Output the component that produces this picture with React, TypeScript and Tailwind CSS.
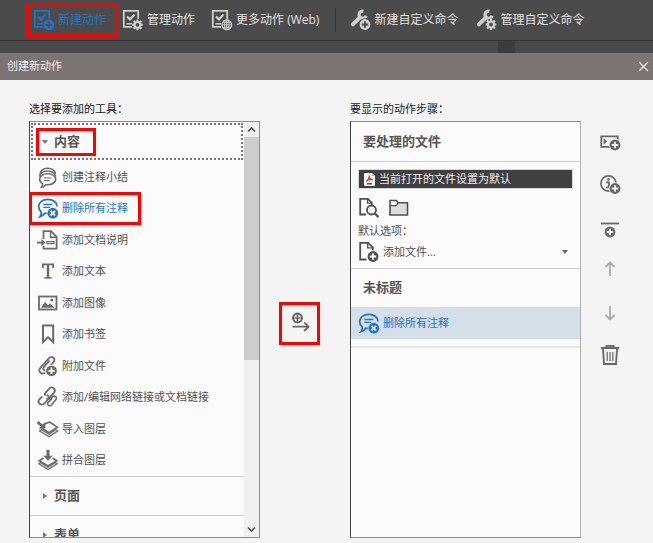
import type { ReactNode } from 'react';

type IconProps = { children: ReactNode; className?: string };

function Icon({ children, className = '' }: IconProps) {
  return (
    <svg
      viewBox="0 0 22 22"
      className={`size-[22px] shrink-0 ${className}`}
      fill="none"
      stroke="currentColor"
      strokeWidth="1.8"
      aria-hidden="true"
    >
      {children}
    </svg>
  );
}

type BadgeProps = { x: number; y: number; cut: string };

function PlusBadge({ x, y, cut }: BadgeProps) {
  return (
    <g transform={`translate(${x} ${y})`}>
      <circle r="6.2" fill={cut} stroke="none" />
      <circle r="5.4" fill="currentColor" stroke="none" />
      <path d="M-3.2 0h6.4M0-3.2v6.4" stroke={cut} strokeWidth="1.8" />
    </g>
  );
}

function GearBadge({ x, y, cut }: BadgeProps) {
  return (
    <g transform={`translate(${x} ${y})`}>
      <circle r="5.8" fill={cut} stroke="none" />
      <circle r="3" strokeWidth="2.2" />
      <path
        d="M0-5.4v2M0 5.4v-2M-5.4 0h2M5.4 0h-2M-3.9-3.9l1.4 1.4M3.9 3.9l-1.4-1.4M-3.9 3.9l1.4-1.4M3.9-3.9l-1.4 1.4"
        strokeWidth="2.1"
      />
    </g>
  );
}

function GlobeBadge({ x, y, cut }: BadgeProps) {
  return (
    <g transform={`translate(${x} ${y})`} strokeWidth="1">
      <circle r="6" fill={cut} stroke="none" />
      <circle r="4.9" strokeWidth="1.2" />
      <ellipse rx="2.2" ry="4.9" />
      <path d="M0-4.9v9.8M-4.9 0h9.8M-4-2.5h8M-4 2.5h8" />
    </g>
  );
}

function CheckDoc() {
  return (
    <>
      <path d="M10.5 17.8H1.8V1.9h14.4V10" />
      <path d="M5 7.5l3 3 4.5-5" strokeWidth="2.2" />
      <path d="M4.5 14.8H10" strokeWidth="1.5" />
    </>
  );
}

function Wrench() {
  return (
    <>
      <path d="M2.9 15.3L10 8.3" strokeWidth="4" strokeLinecap="round" />
      <path d="M13.4 2.2a3.6 3.6 0 1 0 2.7 4.5" strokeWidth="3.2" />
    </>
  );
}

function CommentDelete({ cut }: { cut: string }) {
  return (
    <Icon className="text-[#2574c4]">
      <path d="M11 16.3c-1.1.2-2.3.1-3.3 0-1 1.8-2.6 2.9-4.7 3.4 1-1.3 1.4-2.9 1.3-4.6-1.7-1.4-2.7-3.4-2.7-5.5 0-4.100 4.100-7.300 9.200-7.300s9.200 3 9.200 7.200" />
      <path d="M6.3 7.5h9M6.300 10.400H13" strokeWidth="1.3" />
      <circle cx="15.8" cy="16.2" r="6" fill={cut} stroke="none" />
      <circle cx="15.8" cy="16.2" r="5.4" fill="currentColor" stroke="none" />
      <path d="M13.5 13.9l4.6 4.6M18.1 13.9l-4.6 4.6" stroke={cut} strokeWidth="1.8" />
    </Icon>
  );
}

const LIST_BG = '#fbfbfb';

const tools = [
  {
    label: '创建注释小结',
    icon: (
      <Icon>
        <path
          d="M2.7 8.5c.7-4 3.9-6.3 7.9-6.3s7.2 2.1 8 5.8M2.5 10.7C3.4 7 6.500 5 10.600 5s7.300 1.900 8.200 5.500"
          strokeWidth="1.4"
        />
        <path
          d="M10.7 7.8c4.5 0 8 2.3 8 5.5s-3.5 5.500-8 5.500l-1.900-.1c-1 1.400-2.300 2.200-4.300 2.500.8-1 1.100-2.200 1-3.600-1.700-1-2.800-2.500-2.800-4.300 0-3.200 3.500-5.500 8-5.500z"
          fill={LIST_BG}
          strokeWidth="1.6"
        />
        <path d="M7 12h7.5M7 14.6h5.5" strokeWidth="1.2" />
      </Icon>
    ),
  },
  { label: '删除所有注释', icon: <CommentDelete cut={LIST_BG} />, marked: true },
  {
    label: '添加文档说明',
    icon: (
      <Icon>
        <path d="M6.5 10V2.200H14l5.600 5.600v11.800H6.500V17" />
        <path d="M13.500 2v6.300h6" strokeWidth="1.4" />
        <path d="M0 13.600h5" />
        <path d="M4.300 10l4.300 3.600-4.300 3.600z" fill="currentColor" stroke="none" />
        <rect x="10" y="12.6" width="7" height="2" strokeWidth="1.2" />
      </Icon>
    ),
  },
  {
    label: '添加文本',
    icon: (
      <Icon>
        <path d="M5.9 8V4.300h10.200V8" />
        <path d="M11 4.300v13.500" strokeWidth="2.4" />
        <path d="M7.300 17.900h7.400" strokeWidth="1.6" />
      </Icon>
    ),
  },
  {
    label: '添加图像',
    icon: (
      <Icon>
        <rect x="2" y="4.5" width="17.5" height="13" />
        <path d="M4 15.800l4-6 3 3.500 2-2 4.500 4.500z" fill="currentColor" stroke="none" />
        <circle cx="14.8" cy="8" r="1.5" fill="currentColor" stroke="none" />
      </Icon>
    ),
  },
  {
    label: '添加书签',
    icon: (
      <Icon>
        <path d="M6 2.500h10.200v16.600L11 14.300l-5 4.800z" strokeWidth="2" />
      </Icon>
    ),
  },
  {
    label: '附加文件',
    icon: (
      <Icon>
        <path d="M12.600 5.500l-6 7a2 2 0 0 0 3 2.600l6.700-7.800c3-3.600-1.300-7.300-4.500-3.900l-8.300 9.200c-3 3.500.7 7.400 4.400 5.300" />
        <PlusBadge x={14.5} y={15.8} cut={LIST_BG} />
      </Icon>
    ),
  },
  {
    label: '添加/编辑网络链接或文档链接',
    icon: (
      <Icon>
        <path d="M8.500 9.600C7.600 8.700 7.700 7.600 8.600 6.600l3.600-4c3-2.900 7.300.6 4.900 4l-4.400 5.100c-1 1-2.200 1.100-3.200.5" />
        <path d="M9.600 8.800c2.200.6 2.900 3 1.400 4.700l-3.700 4c-3.100 2.900-7.600-.8-4.900-4.200l3-2.900" />
        <path d="M12.600 14.300l3.200-3.700c1.900-1.600 4.500.4 3.300 2.700l-4.700 5.700c-1.700 1.700-4.300.5-3.800-1.800l4.600-5" strokeWidth="1.6" />
      </Icon>
    ),
  },
  {
    label: '导入图层',
    icon: (
      <Icon>
        <path d="M2.500 13l9.500 5.800 8.800-5.800-2-1.400-6.800 4.400-7.500-4.500z" fill="#d6d6d6" strokeWidth="1.200" />
        <path d="M8 6l4.500-2 7.800 5.200-8.300 5.500L4.500 10" strokeWidth="1.600" />
        <path d="M.5 4l4.800 4" strokeWidth="2.8" />
        <path d="M8.400 3.800v6.700H1.700z" fill="currentColor" stroke="none" />
      </Icon>
    ),
  },
  {
    label: '拼合图层',
    icon: (
      <Icon>
        <path d="M1.800 14.800L11 20.600l9.200-5.800-2-1.300L11 18l-7.200-4.500z" fill="#d6d6d6" strokeWidth="1.200" />
        <path d="M6.500 9l-4.300 2.700L11 17l8.800-5.300L15.500 9" strokeWidth="1.600" />
        <path d="M11 .8V8" strokeWidth="3" />
        <path d="M6.500 6.800h9L11 12z" fill="currentColor" stroke="none" />
      </Icon>
    ),
  },
];

const TOOLBAR_BG = '#4b4b4b';

const actionCommands = [
  {
    label: '管理动作',
    icon: <><CheckDoc /><GearBadge x={15.5} y={15.8} cut={TOOLBAR_BG} /></>,
  },
  {
    label: '更多动作 (Web)',
    icon: <><CheckDoc /><GlobeBadge x={15.8} y={15.8} cut={TOOLBAR_BG} /></>,
  },
];

const customCommands = [
  {
    label: '新建自定义命令',
    icon: <><Wrench /><PlusBadge x={15} y={15.5} cut={TOOLBAR_BG} /></>,
  },
  {
    label: '管理自定义命令',
    icon: <><Wrench /><GearBadge x={15} y={15.5} cut={TOOLBAR_BG} /></>,
  },
];

function Toolbar() {
  return (
    <header className="flex h-10 items-center bg-[#4b4b4b] pl-[26px] text-xs whitespace-nowrap text-[#e2e2e2]">
      <button className="flex h-[34px] w-[92px] items-center gap-[3px] border-3 border-[#ff0000] pl-1 text-[#2574c4]">
        <Icon>
          <CheckDoc />
          <PlusBadge x={15.8} y={15.8} cut={TOOLBAR_BG} />
        </Icon>
        新建动作
      </button>
      <div className="ml-1 flex gap-4">
        {actionCommands.map((command) => (
          <button key={command.label} className="flex items-center gap-[3px]">
            <Icon className="text-[#cfcfcf]">{command.icon}</Icon>
            {command.label}
          </button>
        ))}
      </div>
      <div className="ml-4 h-6 w-px bg-[#333333]" />
      <div className="ml-[14px] flex gap-[18px]">
        {customCommands.map((command) => (
          <button key={command.label} className="flex items-center gap-[2px]">
            <Icon className="text-[#cfcfcf]">{command.icon}</Icon>
            {command.label}
          </button>
        ))}
      </div>
    </header>
  );
}

function ToolList() {
  return (
    <div className="flex h-[417px] overflow-hidden border border-[#8a8a8a] border-l-[#444444] bg-[#fbfbfb]">
      <div className="min-w-0 flex-1">
        <div className="h-[39px] p-px">
          <div className="h-full border-2 border-dotted border-[#777777] py-[3px] pl-[3px]">
            <button className="flex h-7 w-[60px] items-center border-3 border-[#ff0000] pl-[3px] text-[13px] font-bold text-[#555555]">
              <svg viewBox="0 0 6 4" className="mr-[6px] h-1 w-[6px] fill-[#777777]" aria-hidden="true">
                <path d="M0 0h6L3 4z" />
              </svg>
              内容
            </button>
          </div>
        </div>
        <ul className="grid h-[315px] auto-rows-fr text-[11px] text-[#505050]">
          {tools.map((tool) => (
            <li key={tool.label} className="flex items-center">
              <button
                className={
                  tool.marked
                    ? '-my-px -ml-px flex h-[33px] w-[112px] items-center gap-[3px] border-3 border-[#ff0000] pl-[5px] whitespace-nowrap text-[#2574c4]'
                    : 'flex items-center gap-[3px] pl-[7px] whitespace-nowrap'
                }
              >
                <span className="text-[#6b6b6b]">{tool.icon}</span>
                {tool.label}
              </button>
            </li>
          ))}
        </ul>
        {['页面', '表单'].map((section) => (
          <button
            key={section}
            className="flex h-[39px] w-full items-center border-t border-[#cfcfcf] pl-[13px] text-[13px] font-bold text-[#555555]"
          >
            <svg viewBox="0 0 4 6" className="mr-[7px] h-[6px] w-1 fill-[#777777]" aria-hidden="true">
              <path d="M0 0v6l4-3z" />
            </svg>
            {section}
          </button>
        ))}
      </div>
      <div className="flex w-[15px] flex-col justify-between bg-[#f0f0f0] text-[#505050]">
        <div>
          <svg viewBox="0 0 15 15" className="size-[15px]" fill="none" stroke="currentColor" strokeWidth="1.6" aria-hidden="true">
            <path d="M4 9.500L7.500 6 11 9.500" />
          </svg>
          <div className="h-[223px] bg-[#cdcdcd]" />
        </div>
        <svg viewBox="0 0 15 15" className="size-[15px]" fill="none" stroke="currentColor" strokeWidth="1.6" aria-hidden="true">
          <path d="M4 5.500L7.500 9 11 5.500" />
        </svg>
      </div>
    </div>
  );
}

function StepList() {
  return (
    <div className="h-[417px] border border-[#8a8a8a] border-r-[#b0b0b0] border-l-[#444444] bg-[#fbfbfb] text-[11px] text-[#505050]">
      <h3 className="flex h-10 items-center border-b border-[#cfcfcf] pl-3 text-[13px] font-bold text-[#555555]">
        要处理的文件
      </h3>
      <div className="h-[107px] border-b border-[#cfcfcf] px-[7px] pt-[7px]">
        <div className="flex h-5 items-center gap-1 border border-[#d8d8d8] bg-[#404040] pl-[5px] text-[#f0f0f0]">
          <svg viewBox="0 0 11 13" className="h-[13px] w-[11px]" aria-hidden="true">
            <path d="M0 1a1 1 0 0 1 1-1h7l3 3v9a1 1 0 0 1-1 1H1a1 1 0 0 1-1-1z" fill="#f7f7f7" />
            <path d="M8 0v3h3z" fill="#bcbcbc" />
            <path
              d="M5 2.500c.2 3 1.300 4 4 4.300M5.400 3C5 5.500 4 7.300 2 8.400M2.600 7.600C4 6.600 6 6.200 9 6.800"
              fill="none"
              stroke="#e23b32"
              strokeWidth="1.3"
            />
            <path d="M3 10.800h5" stroke="#444444" strokeWidth="1.4" />
          </svg>
          当前打开的文件设置为默认
        </div>
        <div className="mt-2 flex gap-2">
          <button aria-label="查找文件">
            <Icon>
              <path d="M8 17.500H2.200V1.800h7.600l4 4V8" />
              <path d="M9.500 1.800v4.400H14" strokeWidth="1.3" />
              <circle cx="13.5" cy="13" r="4.5" />
              <path d="M16.600 16.200l3.900 3.900" strokeWidth="2.2" />
            </Icon>
          </button>
          <button aria-label="文件夹">
            <Icon>
              <path d="M2 18V3.500h6.500l1.500 2.300h9.500V18z" fill="#dedede" strokeWidth="1.6" />
              <path d="M2.900 4.400H8l1.200 1.800L8 8H2.900z" fill={LIST_BG} stroke="none" />
              <path d="M2 8.700h6.300L10 5.800" strokeWidth="1.2" />
            </Icon>
          </button>
        </div>
        <label htmlFor="default-option" className="mt-1 block h-4 leading-4">
          默认选项：
        </label>
        <div className="mt-[2px] flex items-center gap-[3px]">
          <Icon>
            <path d="M8.500 18.500H2.200V1.800h8l4.600 4.600V10" />
            <path d="M9.700 1.800v5h5" strokeWidth="1.3" />
            <PlusBadge x={15} y={15.5} cut={LIST_BG} />
          </Icon>
          <select id="default-option" className="min-w-0 flex-1 appearance-none bg-transparent">
            <option>添加文件...</option>
          </select>
          <svg viewBox="0 0 6 4" className="mr-[5px] h-1 w-[6px] fill-[#666666]" aria-hidden="true">
            <path d="M0 0h6L3 4z" />
          </svg>
        </div>
      </div>
      <h3 className="flex h-[38px] items-center pl-3 text-[13px] font-bold text-[#555555]">未标题</h3>
      <div className="border-b-2 border-[#e6e6e6] pb-[7px]">
        <button className="flex h-8 w-full items-center gap-[3px] bg-[#d3e0e9] pl-[7px] text-[#2574c4]">
          <CommentDelete cut="#d3e0e9" />
          删除所有注释
        </button>
      </div>
    </div>
  );
}

const SURFACE = '#f4f4f4';

function StepActions() {
  return (
    <div className="flex w-[72px] shrink-0 flex-col items-start pt-8 pl-[18px] text-[#666666]">
      <button aria-label="添加面板">
        <Icon>
          <path d="M11 14.800H2.300V4.300h16.500V9" />
          <path d="M4.600 6.300v6.200l3.600-3.100z" fill="currentColor" stroke="none" />
          <PlusBadge x={16} y={13} cut={SURFACE} />
        </Icon>
      </button>
      <button aria-label="添加说明" className="mt-5">
        <Icon>
          <circle cx="9.5" cy="9.5" r="7.6" strokeWidth="1.6" />
          <path d="M7 8.300h2.900v5M7 13.400h5" />
          <circle cx="9.5" cy="5.4" r="1.3" fill="currentColor" stroke="none" />
          <PlusBadge x={16} y={14.5} cut={SURFACE} />
        </Icon>
      </button>
      <button aria-label="添加分隔线" className="mt-6">
        <Icon>
          <path d="M2 3.500h18" />
          <PlusBadge x={11} y={12} cut={SURFACE} />
        </Icon>
      </button>
      <button aria-label="上移" className="mt-4 text-[#aaaaaa]">
        <Icon>
          <path d="M11 18V5M6.500 9L11 4.500 15.500 9" />
        </Icon>
      </button>
      <button aria-label="下移" className="mt-[22px] text-[#aaaaaa]">
        <Icon>
          <path d="M11 4v13M6.500 13l4.500 4.500 4.500-4.500" />
        </Icon>
      </button>
      <button aria-label="删除" className="mt-5">
        <Icon>
          <path d="M2 4h18M7.500 3.500V1.800h7v1.700" />
          <path d="M4 4.500L5 20h12l1-15.500" />
          <path d="M8.200 8v9M11 8v9M13.800 8v9" strokeWidth="1.2" />
        </Icon>
      </button>
    </div>
  );
}

export function App() {
  return (
    <div className="min-h-screen bg-[#f4f4f4] font-['Open_Sans','Noto_Sans_CJK_SC',sans-serif]">
      <Toolbar />
      <div className="flex h-[13px] justify-end border-t border-[#333333] bg-[#484848] pr-[138px]">
        <div className="w-[17px] bg-[#3c3c3c]" />
      </div>
      <main>
        <div className="flex h-[27px] items-center justify-between bg-[#7b7473] pr-1 pl-[7px] text-[11px] text-[#f0f0f0]">
          <h1>创建新动作</h1>
          <button aria-label="关闭">
            <svg viewBox="0 0 11 11" className="size-[11px]" fill="none" stroke="currentColor" strokeWidth="1.2" aria-hidden="true">
              <path d="M1 1l9 9M10 1l-9 9" />
            </svg>
          </button>
        </div>
        <div className="flex pt-5 pl-[29px]">
          <section className="min-w-0 flex-1">
            <h2 className="h-[21px] text-[11px] leading-[18px] text-[#1a1a1a]">选择要添加的工具：</h2>
            <ToolList />
          </section>
          <div className="flex w-[90px] shrink-0 items-center pt-2 pl-[19px]">
            <button
              aria-label="添加到步骤"
              className="flex h-[43px] w-[41px] items-center justify-center border-3 border-[#ff0000] text-[#666666]"
            >
              <Icon>
                <circle cx="8.5" cy="6" r="4.4" strokeWidth="2.1" />
                <path d="M5.500 6h6M8.500 3v6" strokeWidth="1.6" />
                <path d="M3.500 14.700h16M15.200 10.400l4.300 4.300-4.300 4.300" />
              </Icon>
            </button>
          </div>
          <section className="min-w-0 flex-1">
            <h2 className="h-[21px] text-[11px] leading-[18px] text-[#1a1a1a]">要显示的动作步骤：</h2>
            <StepList />
          </section>
          <StepActions />
        </div>
      </main>
    </div>
  );
}

export default App;
